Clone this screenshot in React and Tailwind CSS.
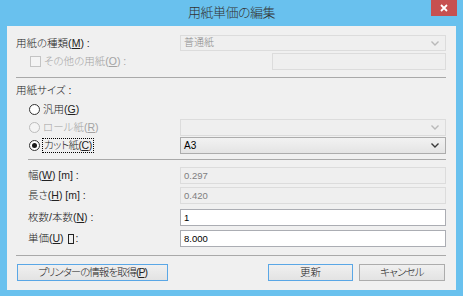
import React from "react";

function Chevron({ disabled }) {
  return (
    <svg width="8" height="5" viewBox="0 0 8 5" className="mr-[2px]">
      <polyline
        points="0.5,0.5 4,4 7.5,0.5"
        fill="none"
        stroke={disabled ? "#b9b9b9" : "#3a3a3a"}
        strokeWidth="1.4"
      />
    </svg>
  );
}

function Select({ value, disabled, h = "h-[17px]" }) {
  return (
    <div
      className={
        "w-[266px] " + h + " flex items-center justify-between pl-[3px] pr-[4px] border text-[10px] " +
        (disabled
          ? "border-[#dcdcdc] bg-[#efefef] text-[#8a8a8a]"
          : "border-[#acacac] bg-gradient-to-b from-[#f2f2f2] to-[#e4e4e4] text-black")
      }
    >
      <span>{value}</span>
      <Chevron disabled={disabled} />
    </div>
  );
}

function Input({ value, disabled, w = "w-[266px]" }) {
  return (
    <div
      className={
        w + " h-[17px] flex items-center pl-[3px] border text-[9.5px] " +
        (disabled
          ? "border-[#dcdcdc] bg-[#efefef] text-[#7e7e7e]"
          : "border-[#abadb3] bg-white text-black")
      }
    >
      {value}
    </div>
  );
}

function Radio({ checked, disabled }) {
  return (
    <span
      className={
        "w-[11px] h-[11px] rounded-full border flex items-center justify-center " +
        (disabled ? "border-[#bcbcbc] bg-[#f4f4f4]" : "border-[#333] bg-white")
      }
    >
      {checked && <span className="w-[5px] h-[5px] rounded-full bg-[#1a1a1a]" />}
    </span>
  );
}

function Button({ children, w, focus }) {
  return (
    <div
      className={
        w + " h-[17px] flex items-center justify-center border bg-gradient-to-b from-[#f0f0f0] to-[#e3e3e3] " +
        (focus ? "border-[#5aa7e6]" : "border-[#acacac]")
      }
    >
      {children}
    </div>
  );
}

export default function App() {
  return (
    <div className="w-[463px] h-[296px] bg-[#69c1ee] relative flex flex-col font-['Liberation_Sans','Noto_Sans_CJK_JP',sans-serif] [font-feature-settings:'palt'] font-light text-[10.5px] leading-none text-[#222]">
      {/* title bar */}
      <div className="h-[26px] flex items-center justify-center pb-[1px] text-[13px] tracking-[-0.5px] text-[#333]">
        用紙単価の編集
      </div>
      <div className="absolute top-0 right-[6px] w-[26px] h-[16px] bg-[#c75050] flex items-center justify-center">
        <svg width="8" height="8" viewBox="0 0 8 8">
          <path d="M1 1L7 7M7 1L1 7" stroke="#fff" strokeWidth="1.8" />
        </svg>
      </div>

      {/* body */}
      <div className="mx-[7px] h-[264px] bg-[#f0f0f0] pt-[9px] pl-[9px] pr-[10px] flex flex-col">
        <div className="h-[16px] flex items-center">
          <span className="w-[164px]">
            用紙の種類(<u>M</u>) :
          </span>
          <Select value="普通紙" disabled h="h-[16px]" />
        </div>

        <div className="mt-[2px] h-[17px] flex items-center">
          <span className="ml-[14px] w-[11px] h-[11px] border border-[#c4c4c4] bg-[#f4f4f4]" />
          <span className="ml-[3px] text-[#a3a3a3]">
            その他の用紙(<u>O</u>) :
          </span>
          <div className="ml-auto">
            <Input value="" disabled w="w-[174px]" />
          </div>
        </div>

        <div className="mt-[7px] h-px bg-[#a9a9a9]" />

        <div className="mt-[4px] h-[16px] flex items-center">用紙サイズ :</div>

        <div className="mt-[3px] h-[17px] flex items-center pl-[13px]">
          <Radio />
          <span className="ml-[3px]">
            汎用(<u>G</u>)
          </span>
        </div>

        <div className="mt-[1px] h-[17px] flex items-center pl-[13px]">
          <Radio disabled />
          <span className="ml-[3px] text-[#a3a3a3]">
            ロール紙(<u>R</u>)
          </span>
          <div className="ml-auto">
            <Select value="" disabled />
          </div>
        </div>

        <div className="mt-[1px] h-[17px] flex items-center pl-[13px]">
          <Radio checked />
          <span className="ml-[2px] px-[1px] py-[1px] border border-dotted border-black tracking-[-0.5px]">
            カット紙(<u>C</u>)
          </span>
          <div className="ml-auto">
            <Select value="A3" />
          </div>
        </div>

        <div className="mt-[5px] ml-[12px] h-px bg-[#a9a9a9]" />

        <div className="mt-[7px] h-[17px] flex items-center pl-[12px]">
          <span>
            幅(<u>W</u>) [m] :
          </span>
          <div className="ml-auto">
            <Input value="0.297" disabled />
          </div>
        </div>

        <div className="mt-[3px] h-[17px] flex items-center pl-[12px]">
          <span>
            長さ(<u>H</u>) [m] :
          </span>
          <div className="ml-auto">
            <Input value="0.420" disabled />
          </div>
        </div>

        <div className="mt-[5px] h-[17px] flex items-center pl-[12px]">
          <span>
            枚数/本数(<u>N</u>) :
          </span>
          <div className="ml-auto">
            <Input value="1" />
          </div>
        </div>

        <div className="mt-[4px] h-[17px] flex items-center pl-[12px]">
          <span className="flex items-center">
            単価(<u>U</u>)
            <span className="ml-[4px] w-[6px] h-[10px] border border-[#222]" />
            <span className="ml-[2px]">:</span>
          </span>
          <div className="ml-auto">
            <Input value="8.000" />
          </div>
        </div>

        <div className="mt-[8px] h-px bg-[#a9a9a9]" />

        <div className="mt-[8px] flex items-center">
          <div className="ml-[1px]">
            <Button w="w-[151px]" focus>
              <span className="tracking-[-1px]">
                プリンターの情報を取得(<u>P</u>)
              </span>
            </Button>
          </div>
          <div className="ml-auto flex gap-[6px] mr-[1px]">
            <Button w="w-[85px]" focus>
              更新
            </Button>
            <Button w="w-[86px]">
              <span className="tracking-[-0.8px]">キャンセル</span>
            </Button>
          </div>
        </div>
      </div>
    </div>
  );
}
